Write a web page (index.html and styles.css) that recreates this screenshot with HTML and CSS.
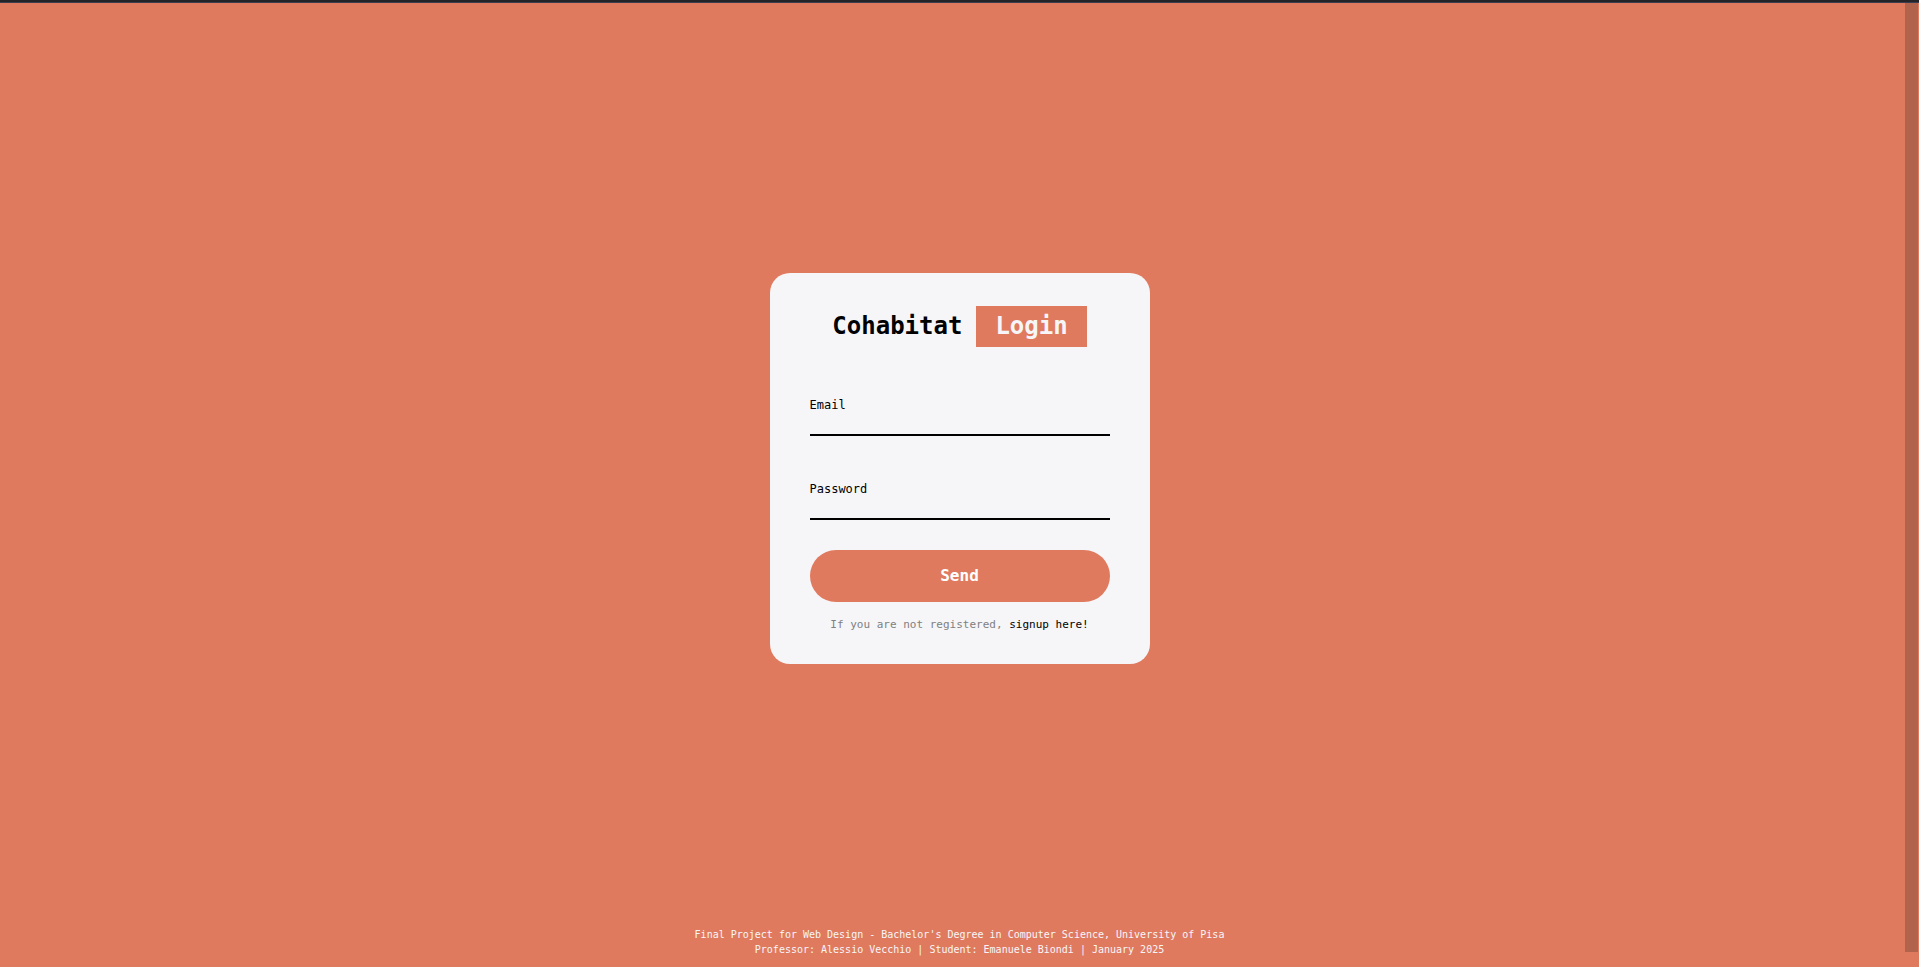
FILE: index.html
```html
<!DOCTYPE html>
<html lang="en">
<head>
<meta charset="utf-8">
<meta name="viewport" content="width=device-width, initial-scale=1">
<title>Cohabitat Login</title>
<link rel="stylesheet" href="styles.css">
</head>
<body>
<div class="top-strip" aria-hidden="true"></div>
<main class="page">
  <form class="card">
    <h1 class="title">Cohabitat <span class="tag">Login</span></h1>
    <div class="field">
      <label for="email">Email</label>
      <input id="email" type="email" name="email">
    </div>
    <div class="field">
      <label for="password">Password</label>
      <input id="password" type="password" name="password">
    </div>
    <button class="send" type="submit">Send</button>
    <p class="note">If you are not registered, <a href="#signup">signup here!</a></p>
  </form>
</main>
<footer class="footer">
  <p>Final Project for Web Design - Bachelor's Degree in Computer Science, University of Pisa</p>
  <p>Professor: Alessio Vecchio | Student: Emanuele Biondi | January 2025</p>
</footer>
<div class="scroll-thumb" aria-hidden="true"></div>
</body>
</html>
```

FILE: styles.css
```css
:root {
  --accent: #e07a5f;
  --paper: #f6f6f9;
}

* {
  box-sizing: border-box;
  margin: 0;
}

body {
  position: relative;
  display: flex;
  flex-direction: column;
  min-height: 100vh;
  background: var(--accent);
  color: #000;
  font-family: "DejaVu Sans Mono", monospace;
}

.top-strip {
  height: 3px;
  border-bottom: 1px solid #3a3d50;
  background: #242428;
}

.page {
  flex: 1;
  display: flex;
  align-items: center;
  justify-content: center;
  padding-top: 6px;
}

.card {
  display: flex;
  flex-direction: column;
  width: 380px;
  max-width: 100%;
  padding: 33px 40px 32px;
  border-radius: 20px;
  background: var(--paper);
}

.title {
  display: flex;
  justify-content: center;
  gap: 14px;
  margin-bottom: 51px;
  font-size: 24px;
  line-height: 41px;
}

.tag {
  padding: 0 19px;
  background: var(--accent);
  color: var(--paper);
}

.field {
  display: flex;
  flex-direction: column;
  font-size: 12px;
  line-height: 15px;
}

.field + .field {
  margin-top: 46px;
}

.field input {
  width: 100%;
  height: 23px;
  padding: 0;
  border: 0;
  border-bottom: 2px solid #000;
  border-radius: 0;
  outline: 0;
  background: transparent;
  font: inherit;
}

.send {
  height: 52px;
  margin-top: 30px;
  border: 0;
  border-radius: 26px;
  background: var(--accent);
  color: #fff;
  font-family: inherit;
  font-size: 16px;
  font-weight: bold;
  cursor: pointer;
}

.note {
  margin-top: 16px;
  color: #808080;
  font-size: 11px;
  line-height: 14px;
  text-align: center;
}

.note a {
  color: #000;
  text-decoration: none;
}

.footer {
  padding-bottom: 10px;
  color: var(--paper);
  font-size: 10px;
  line-height: 15px;
  text-align: center;
}

.scroll-thumb {
  position: absolute;
  top: 3px;
  right: 1px;
  bottom: 15px;
  width: 13px;
  background: #b2634c;
}
```
